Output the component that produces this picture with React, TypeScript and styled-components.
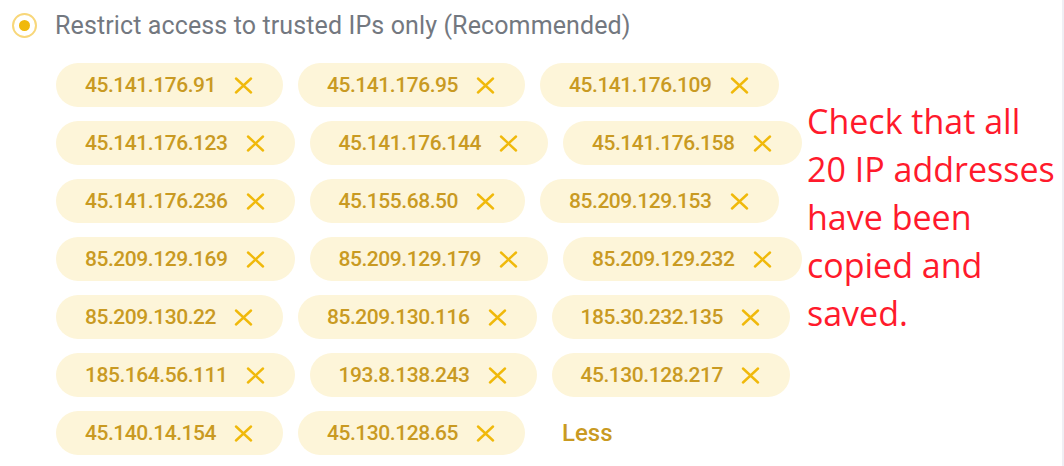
import React from "react";
import styled, { createGlobalStyle } from "styled-components";

const GlobalStyle = createGlobalStyle`
  html, body {
    margin: 0;
    padding: 0;
    background: #ffffff;
  }
  body {
    font-family: Roboto, "Liberation Sans", sans-serif;
  }
`;

const Page = styled.div`
  width: 1062px;
  height: 466px;
  border-right: 2px solid #efeff4;
  display: flex;
  flex-direction: column;
  overflow: hidden;
`;

const OptionRow = styled.label`
  flex-shrink: 0;
  height: 50px;
  display: flex;
  align-items: center;
  gap: 18px;
  padding-left: 12px;
  cursor: pointer;
`;

const Radio = styled.span`
  box-sizing: border-box;
  width: 25px;
  height: 25px;
  border-radius: 50%;
  border: 2px solid #f8d77a;
  display: flex;
  align-items: center;
  justify-content: center;

  &::after {
    content: "";
    width: 11px;
    height: 11px;
    border-radius: 50%;
    background: #f0b90b;
  }
`;

const OptionText = styled.span`
  font-size: 25px;
  color: #737880;
  letter-spacing: 0.12px;
`;

const Body = styled.div`
  flex-shrink: 0;
  display: flex;
  align-items: flex-start;
  margin-top: 13px;
  padding-left: 56px;
`;

const ChipList = styled.div`
  width: 751px;
  flex-shrink: 0;
  display: flex;
  flex-wrap: wrap;
  align-items: center;
  column-gap: 15px;
  row-gap: 14px;
`;

const Chip = styled.div`
  height: 44px;
  box-sizing: border-box;
  padding: 0 30px 0 29px;
  border-radius: 22px;
  background: #fdf5d9;
  display: flex;
  align-items: center;
  gap: 18px;
`;

const ChipText = styled.span`
  font-size: 21px;
  font-weight: 500;
  letter-spacing: -0.45px;
  color: #c99a22;
`;

const RemoveButton = styled.button`
  border: 0;
  background: none;
  padding: 0;
  width: 19px;
  height: 18px;
  display: flex;
  align-items: center;
  justify-content: center;
  cursor: pointer;
`;

const LessButton = styled.button`
  border: 0;
  background: none;
  padding: 0 0 0 22px;
  height: 44px;
  font-family: Roboto, "Liberation Sans", sans-serif;
  font-size: 24px;
  font-weight: 500;
  color: #c99a22;
  cursor: pointer;
`;

const Note = styled.div`
  margin-top: 34px;
  font-family: "Open Sans", "Liberation Sans", sans-serif;
  font-size: 34px;
  line-height: 48px;
  color: #ff1a2c;
  white-space: nowrap;
`;

const ips = [
  "45.141.176.91",
  "45.141.176.95",
  "45.141.176.109",
  "45.141.176.123",
  "45.141.176.144",
  "45.141.176.158",
  "45.141.176.236",
  "45.155.68.50",
  "85.209.129.153",
  "85.209.129.169",
  "85.209.129.179",
  "85.209.129.232",
  "85.209.130.22",
  "85.209.130.116",
  "185.30.232.135",
  "185.164.56.111",
  "193.8.138.243",
  "45.130.128.217",
  "45.140.14.154",
  "45.130.128.65",
];

const CloseIcon = () => (
  <svg width="19" height="17" viewBox="0 0 19 17" fill="none">
    <path
      d="M2 1.5L17 15.5M17 1.5L2 15.5"
      stroke="#f0b90b"
      strokeWidth="2.4"
      strokeLinecap="round"
    />
  </svg>
);

const App = () => (
  <>
    <GlobalStyle />
    <Page>
      <OptionRow>
        <Radio />
        <OptionText>Restrict access to trusted IPs only (Recommended)</OptionText>
      </OptionRow>
      <Body>
        <ChipList>
          {ips.map((ip) => (
            <Chip key={ip}>
              <ChipText>{ip}</ChipText>
              <RemoveButton aria-label={`Remove ${ip}`}>
                <CloseIcon />
              </RemoveButton>
            </Chip>
          ))}
          <LessButton>Less</LessButton>
        </ChipList>
        <Note>
          Check that all
          <br />
          20 IP addresses
          <br />
          have been
          <br />
          copied and
          <br />
          saved.
        </Note>
      </Body>
    </Page>
  </>
);

export default App;
